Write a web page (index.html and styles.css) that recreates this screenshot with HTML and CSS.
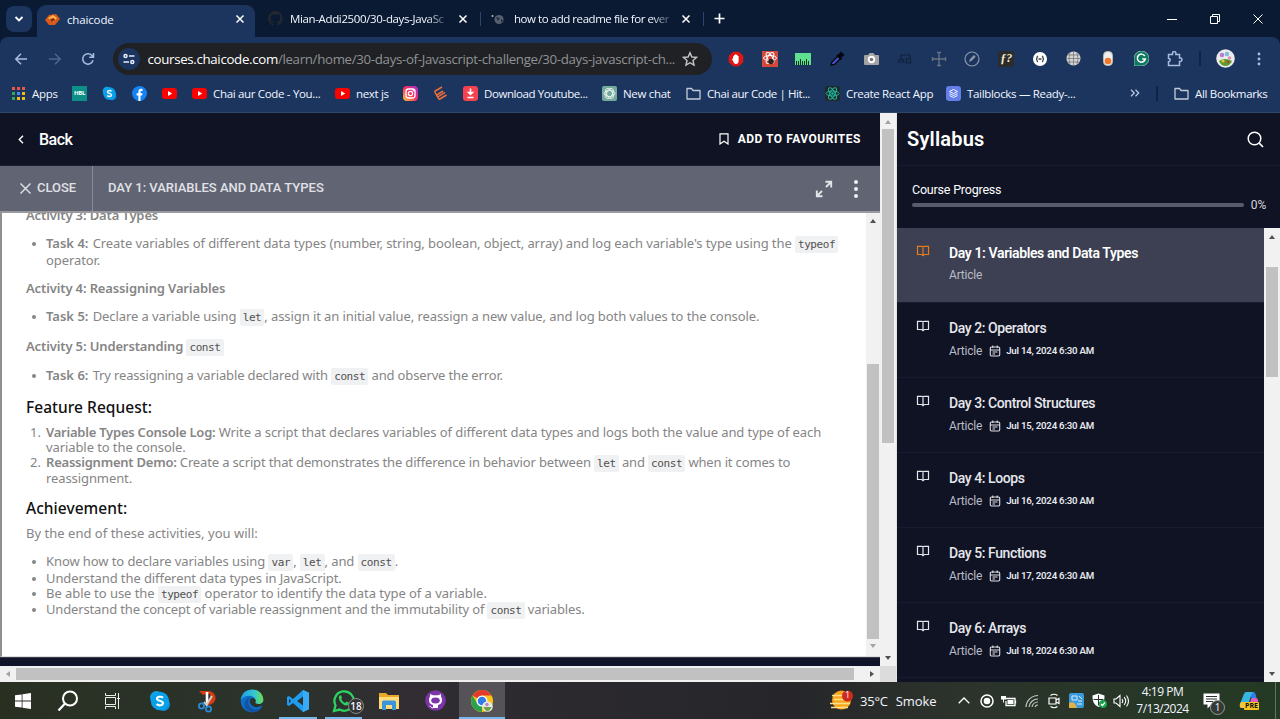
FILE: index.html
```html
<!DOCTYPE html>
<html lang="en">
<head>
<meta charset="utf-8">
<title>chaicode</title>
<link rel="stylesheet" href="styles.css">
</head>
<body>
<svg class="defs" width="0" height="0">
  <symbol id="x" viewBox="0 0 10 10"><path d="M1.500 1.500l7 7M8.500 1.500l-7 7" fill="none" stroke="currentColor" stroke-width="1.500"/></symbol>
  <symbol id="yt" viewBox="0 0 15 15"><rect y="2" width="15" height="11" rx="3" fill="#f00"/><path d="M6 5l4.200 2.500L6 10z" fill="#fff"/></symbol>
  <symbol id="folder" viewBox="0 0 15 15"><path d="M1 2.500h4.500l1.600 2H14v8.500H1z" fill="none" stroke="#c3cbdb" stroke-width="1.300" stroke-linejoin="round"/></symbol>
  <symbol id="book" viewBox="0 0 14 12"><path d="M1.500 1.300H6l1 .7 1-.7h4.500v8.200H8.300L7 10.600 5.700 9.500H1.500zM7 2v8.500" fill="none" stroke="currentColor" stroke-width="1.200"/></symbol>
  <symbol id="cal" viewBox="0 0 12 12"><path d="M2.500 2h7q1.200 0 1.200 1.200v6.600q0 1.200-1.200 1.200h-7q-1.200 0-1.200-1.200V3.200Q1.300 2 2.500 2zM1.500 5h9M3.800.5v2.500M8.200.5v2.500M3.500 7h5M3.500 9h2.500" fill="none" stroke="#dcdde4" stroke-width="1.100"/></symbol>
  <symbol id="skype" viewBox="0 0 22 22"><circle cx="7.500" cy="7.500" r="6.500" fill="#12a5e8"/><circle cx="14.500" cy="14.500" r="6.500" fill="#0b8ee0"/><circle cx="11" cy="11" r="9.200" fill="#08a0e9"/><path d="M14 7.800C12.500 6.300 8 6.200 8 8.700s6 1.600 6 4.400-4.800 2.800-6.300.9" fill="none" stroke="#fff" stroke-width="2.100"/></symbol>
</svg>

<div class="tabs">
  <div class="tab-search"><svg width="10" height="8" viewBox="0 0 10 8"><path d="M1.500 2L5 5.500 8.500 2" fill="none" stroke="#fff" stroke-width="1.800"/></svg></div>
  <div class="tab active">
    <svg width="15" height="13" viewBox="0 0 15 13"><path d="M0 7l4-5 7-1 4 5-5 6-6 0z" fill="#d65a1c"/><path d="M3 5l5-3 4 3-4 4z" fill="#ffb34a"/><path d="M5 6l4-1 1 2-3 2z" fill="#8a2c0b"/></svg>
    <span class="tab-name ui t-chai">chaicode</span>
    <svg class="tab-x" width="10" height="10"><use href="#x"/></svg>
  </div>
  <div class="tab tab2">
    <svg width="15" height="15" viewBox="0 0 16 16"><path fill="#23282f" d="M8 0a8 8 0 0 0-2.500 15.600c.4.100.5-.2.500-.4v-1.500c-2.200.5-2.700-1-2.700-1-.4-.9-.9-1.200-.9-1.200-.7-.5.1-.5.1-.5.800.1 1.200.8 1.200.8.700 1.200 1.900.9 2.300.7.100-.5.300-.9.500-1.100-1.800-.2-3.600-.9-3.600-4 0-.9.300-1.600.8-2.100-.1-.2-.4-1 .1-2.100 0 0 .7-.2 2.200.8a7.500 7.500 0 0 1 4 0c1.500-1 2.200-.8 2.200-.8.400 1.100.2 1.900.1 2.100.5.600.8 1.300.8 2.100 0 3.100-1.900 3.700-3.700 3.900.3.300.6.800.6 1.500v2.200c0 .2.100.5.500.4A8 8 0 0 0 8 0z"/></svg>
    <span class="tab-name ui fade">Mian-Addi2500/30-days-JavaSc</span>
    <svg class="tab-x" width="10" height="10"><use href="#x"/></svg>
  </div>
  <i class="tab-sep"></i>
  <div class="tab tab3">
    <svg width="13" height="12" viewBox="0 0 13 12"><circle cx="1.500" cy="3" r="1" fill="#bbb"/><circle cx="8" cy="6.500" r="4.600" fill="#57606e"/><path d="M5 4l4 1-2 3zM10 6l2 1-2 3z" fill="#222c3c"/></svg>
    <span class="tab-name ui fade">how to add readme file for ever</span>
    <svg class="tab-x" width="10" height="10"><use href="#x"/></svg>
  </div>
  <i class="tab-sep"></i>
  <svg class="plus" width="11" height="11" viewBox="0 0 11 11"><path d="M5.500.5v10M.5 5.500h10" stroke="#fff" stroke-width="1.700"/></svg>
  <div class="winctl">
    <svg width="10" height="10" viewBox="0 0 10 10"><path d="M0 5.500h10" stroke="#fff"/></svg>
    <svg width="10" height="10" viewBox="0 0 10 10"><path d="M.5 2.500h7v7h-7zM2.500 2.500v-2h7v7h-2" fill="none" stroke="#fff"/></svg>
    <svg width="10" height="10" viewBox="0 0 10 10"><path d="M.5.500l9 9M9.500.500l-9 9" stroke="#fff"/></svg>
  </div>
</div>

<div class="chrome">
  <div class="toolbar">
    <svg class="nav" width="14" height="14" viewBox="0 0 14 14"><path d="M13 7H2M7 1.800L1.800 7 7 12.200" fill="none" stroke="#a9bde0" stroke-width="1.500"/></svg>
    <svg class="nav" width="14" height="14" viewBox="0 0 14 14"><path d="M1 7h11M7 1.800L12.200 7 7 12.200" fill="none" stroke="#4d668e" stroke-width="1.500"/></svg>
    <svg class="nav" width="14" height="14" viewBox="0 0 14 14"><path d="M12 8.200A5.200 5.200 0 1 1 10.700 3.300L12.200 5M12.500 1v4.300H8.200" fill="none" stroke="#a9bde0" stroke-width="1.500"/></svg>
    <div class="omnibox">
      <div class="site"><svg width="12" height="12" viewBox="0 0 12 12"><g fill="none" stroke="#e8eefb" stroke-width="1.500"><circle cx="2.500" cy="3" r="1.500"/><path d="M6 3h5.500M.5 9H6"/><circle cx="9.300" cy="9" r="1.500"/></g></svg></div>
      <span class="url"><b>courses.chaicode.com</b>/learn/home/30-days-of-Javascript-challenge/30-days-javascript-ch...</span>
      <svg width="16" height="16" viewBox="0 0 16 16"><path d="M8 1.700l1.900 4.300 4.600.4-3.500 3.100 1 4.600L8 11.700l-4 2.400 1-4.600L1.500 6.400l4.600-.4z" fill="none" stroke="#c7c7c7" stroke-width="1.400"/></svg>
    </div>
    <div class="exts">
      <span><svg width="16" height="16" viewBox="0 0 16 16"><path d="M5 .7h6L15.300 5v6L11 15.300H5L.7 11V5z" fill="#e01616"/><path d="M5 8V5.200h1V4h1.200v-.8h1.200V4h1.200v1h1v5c0 2-1 3-2.700 3S5.600 11.500 5 10L3.700 7.800z" fill="#fff"/></svg></span>
      <span><svg width="16" height="16" viewBox="0 0 16 16"><rect width="16" height="16" fill="#d5483c"/><g fill="none" stroke="#fff"><ellipse cx="8" cy="7" rx="6.500" ry="2.500"/><ellipse cx="8" cy="7" rx="2.500" ry="6" transform="rotate(30 8 7)"/><ellipse cx="8" cy="7" rx="2.500" ry="6" transform="rotate(-30 8 7)"/></g><circle cx="9" cy="10.500" r="2.800" fill="#302020"/></svg></span>
      <span><svg width="16" height="12" viewBox="0 0 16 12"><rect width="16" height="12" fill="#5fe08f"/><path d="M1.500 12V8M3.500 12V8M5.500 12V6M7.500 12V8M9.500 12V8M11.500 12V6M13.500 12V8" stroke="#14351f"/></svg></span>
      <span><svg width="16" height="16" viewBox="0 0 16 16"><path d="M2 14l1-3 6-6 2.500 2.500-6 6z" fill="#4b50c8" stroke="#05070c" stroke-width="1.300"/><path d="M8 4l4.500 4.500M9.500 5L12 2l2 2-3 2.500z" stroke="#05070c" stroke-width="2" fill="#05070c"/></svg></span>
      <span><svg width="15" height="14" viewBox="0 0 15 14"><path d="M1 3h3l1.500-2h4L11 3h3q1 0 1 1v8q0 1-1 1H1q-1 0-1-1V4q0-1 1-1z" fill="#a3a3a3"/><circle cx="7.500" cy="7.500" r="3.700" fill="#fff"/><circle cx="7.500" cy="7.500" r="1.800" fill="#777"/></svg></span>
      <span><svg width="14" height="10" viewBox="0 0 14 10"><path d="M3 5V1h9v3M0 8h7M1 5.500h4.500V8H1zM8.500 4.500h4V9h-4z" fill="none" stroke="#10213d" stroke-width="1.200"/></svg></span>
      <span><svg width="16" height="16" viewBox="0 0 16 16"><path d="M8 2v12M1 8h14M6 1.500h4M6 14.500h4M1.500 6v4M14.500 6v4" stroke="#68717f" stroke-width="1.400"/></svg></span>
      <span><svg width="16" height="16" viewBox="0 0 16 16"><circle cx="8" cy="8" r="7" fill="none" stroke="#8b98ac" stroke-width="1.200"/><path d="M5 11l1-3 4-4 1.700 1.700-4 4z" fill="#8b98ac"/></svg></span>
      <span><b class="fx">ƒ?</b></span>
      <span><svg width="14" height="14" viewBox="0 0 14 14"><circle cx="7" cy="7" r="7" fill="#fff"/><path d="M4.800 4Q2.500 7 4.800 10M9.200 4Q11.500 7 9.200 10M5.500 7h3" fill="none" stroke="#444" stroke-width="1.300"/></svg></span>
      <span><svg width="15" height="15" viewBox="0 0 15 15"><circle cx="7.500" cy="7.500" r="7" fill="#d5d5d5"/><path d="M7.500.5v14M.5 7.500h14M1.500 4h12M1.500 11h12M4 1.500q-2 6 0 12M11 1.500q2 6 0 12" fill="none" stroke="#777" stroke-width=".8"/></svg></span>
      <span><svg width="10" height="15" viewBox="0 0 10 15"><rect x=".5" y=".5" width="9" height="14" rx="4" fill="#eee" stroke="#bba"/><circle cx="5" cy="10" r="3.300" fill="#f0772b"/></svg></span>
      <span><svg width="15" height="15" viewBox="0 0 15 15"><path d="M0 15V7.500A7.500 7.500 0 1 1 7.500 15z" fill="#0e7a5f" stroke="#cfe8e0" stroke-width=".6"/><path d="M10.800 5A4 4 0 1 0 11.300 8H8.200" fill="none" stroke="#fff" stroke-width="1.500"/></svg></span>
      <span><svg width="16" height="16" viewBox="0 0 16 16"><path d="M1.500 3.500h4V2.300a1.700 1.700 0 0 1 3.400 0v1.200h3.600v3.600h.8a1.700 1.700 0 0 1 0 3.400h-.8v4h-11v-3.700c2.300 0 2.300-3.400 0-3.400z" fill="none" stroke="#a9bde0" stroke-width="1.500"/></svg></span>
    </div>
    <i class="bar-sep"></i>
    <svg class="avatar" width="19" height="19" viewBox="0 0 19 19"><circle cx="9.500" cy="9.500" r="9.300" fill="#e9ecea"/><path d="M3 12q6-4 13 0-2 5-6.500 5T3 12z" fill="#5d9b32"/><circle cx="6" cy="6" r="2.300" fill="#bd7cd4"/><circle cx="11" cy="5" r="2.200" fill="#7bbbe8"/><circle cx="13.500" cy="9" r="1.800" fill="#e090b0"/><circle cx="7" cy="12" r="1.500" fill="#e8c437"/><circle cx="12" cy="13" r="1.200" fill="#c03a2b"/></svg>
    <svg class="kebab" width="4" height="14" viewBox="0 0 4 14"><g fill="#a9bde0"><circle cx="2" cy="2" r="1.400"/><circle cx="2" cy="7" r="1.400"/><circle cx="2" cy="12" r="1.400"/></g></svg>
  </div>
  <div class="bookmarks ui">
    <div class="bm"><svg width="13" height="13" viewBox="0 0 13 13"><path d="M0 1.500h3" stroke="#ea5546" stroke-width="3"/><path d="M5 1.500h3" stroke="#ea5546" stroke-width="3"/><path d="M10 1.500h3" stroke="#ea5546" stroke-width="3"/><path d="M0 6.500h3M0 11.500h3" stroke="#36a853" stroke-width="3"/><path d="M5 6.500h3" stroke="#4b8bf4" stroke-width="3"/><path d="M10 6.500h3M5 11.500h3M10 11.500h3" stroke="#f8bb15" stroke-width="3"/></svg><span class="w25">Apps</span></div>
    <div class="bm"><b class="hbl">HBL</b></div>
    <div class="bm"><svg width="15" height="15"><use href="#skype"/></svg></div>
    <div class="bm"><svg width="15" height="15" viewBox="0 0 15 15"><circle cx="7.500" cy="7.500" r="7.500" fill="#1583f2"/><path d="M6.400 15V9.400H4.600V7.200h1.800V5.800c0-2 1-3 2.700-3l1.400.1v2h-1c-.8 0-1 .4-1 1.100v1.200h2l-.4 2.200H8.500V15z" fill="#fff"/></svg></div>
    <div class="bm"><svg width="15" height="15"><use href="#yt"/></svg></div>
    <div class="bm"><svg width="15" height="15"><use href="#yt"/></svg><span class="w108">Chai aur Code - You...</span></div>
    <div class="bm"><svg width="15" height="15"><use href="#yt"/></svg><span class="w32">next js</span></div>
    <div class="bm"><svg width="15" height="15" viewBox="0 0 15 15"><defs><linearGradient id="ig" x1="0" y1="1" x2="1" y2="0"><stop offset="0" stop-color="#ffc83d"/><stop offset=".5" stop-color="#f5305f"/><stop offset="1" stop-color="#a22bdc"/></linearGradient></defs><rect width="15" height="15" rx="4" fill="url(#ig)"/><rect x="3" y="3" width="9" height="9" rx="2.500" fill="none" stroke="#fff" stroke-width="1.300"/><circle cx="7.500" cy="7.500" r="2.100" fill="none" stroke="#fff" stroke-width="1.200"/><circle cx="10.300" cy="4.700" r=".7" fill="#fff"/></svg></div>
    <div class="bm"><svg width="15" height="15" viewBox="0 0 15 15"><path d="M1.500 5.500l4.500 8M1.500 5.500L9 1M3.800 9l6.200-4M6 13.500L13.500 9M5 10.800l7-4.500" fill="none" stroke="#ee6c3c" stroke-width="1.500"/></svg></div>
    <div class="bm"><svg width="15" height="15" viewBox="0 0 15 15"><rect width="15" height="15" rx="3" fill="#f4434e"/><path d="M7.500 2.500v5M5.500 6.500l2 2 2-2zM4.500 11.500h6" fill="#fff" stroke="#fff" stroke-width="1.500"/></svg><span class="w103">Download Youtube...</span></div>
    <div class="bm"><svg width="15" height="15" viewBox="0 0 15 15"><rect width="15" height="15" rx="2" fill="#74aa9c"/><g fill="none" stroke="#fff" stroke-width=".8"><ellipse cx="7.500" cy="7.500" rx="5.500" ry="3"/><ellipse cx="7.500" cy="7.500" rx="5.500" ry="3" transform="rotate(60 7.500 7.500)"/><ellipse cx="7.500" cy="7.500" rx="5.500" ry="3" transform="rotate(120 7.500 7.500)"/></g></svg><span class="w48">New chat</span></div>
    <div class="bm"><svg width="15" height="15"><use href="#folder"/></svg><span class="w103">Chai aur Code | Hit...</span></div>
    <div class="bm"><svg width="15" height="15" viewBox="0 0 15 15"><rect width="15" height="15" rx="2" fill="#20282c"/><g fill="none" stroke="#1fb59a"><ellipse cx="7.500" cy="7.500" rx="6.500" ry="2.500"/><ellipse cx="7.500" cy="7.500" rx="6.500" ry="2.500" transform="rotate(60 7.500 7.500)"/><ellipse cx="7.500" cy="7.500" rx="6.500" ry="2.500" transform="rotate(120 7.500 7.500)"/></g><circle cx="7.500" cy="7.500" r="1.300" fill="#1fb59a"/></svg><span class="w86">Create React App</span></div>
    <div class="bm"><svg width="15" height="15" viewBox="0 0 15 15"><rect width="15" height="15" rx="3" fill="#667eea"/><path d="M7.500 3.500l4 2-4 2-4-2zM3.500 7.500l4 2 4-2M3.500 9.500l4 2 4-2" fill="none" stroke="#fff" stroke-width=".9"/></svg><span class="w108">Tailblocks — Ready-...</span></div>
    <div class="bm-end">
      <svg width="10" height="8" viewBox="0 0 10 8"><path d="M1 .8L4.200 4 1 7.200M5.500.8L8.700 4 5.500 7.200" fill="none" stroke="#b5c6e6" stroke-width="1.300"/></svg>
      <i class="bar-sep"></i>
      <div class="bm"><svg width="15" height="15"><use href="#folder"/></svg><span class="w71">All Bookmarks</span></div>
    </div>
  </div>
</div>

<div class="page">
  <main>
    <div class="head">
      <svg width="6" height="9" viewBox="0 0 6 9"><path d="M5 .8L1.300 4.500 5 8.200" fill="none" stroke="#fff" stroke-width="1.400"/></svg>
      <span class="back">Back</span>
      <div class="fav"><svg width="10" height="12" viewBox="0 0 10 12"><path d="M1 .8h8v10.200L5 8.200 1 11z" fill="none" stroke="#fff" stroke-width="1.200"/></svg><span>ADD TO FAVOURITES</span></div>
    </div>
    <div class="strip">
      <div class="close"><svg width="11" height="11" viewBox="0 0 11 11"><path d="M.5.500l10 10M10.500.500l-10 10" stroke="#e3e4e8" stroke-width="1.400"/></svg><span>CLOSE</span></div>
      <span class="crumb">DAY 1: VARIABLES AND DATA TYPES</span>
      <svg width="18" height="18" viewBox="0 0 18 18"><path d="M10.500 1.800h5.700v5.700M16 2l-5 5M7.500 16.200H1.800v-5.700M2 16l5-5" fill="none" stroke="#e3e4e8" stroke-width="1.900"/></svg>
      <svg class="more" width="4" height="18" viewBox="0 0 4 18"><g fill="#eceef2"><circle cx="2" cy="2" r="2"/><circle cx="2" cy="9" r="2"/><circle cx="2" cy="16" r="2"/></g></svg>
    </div>
    <div class="frame">
      <article>
        <p class="a1"><b>Activity 3: Data Types</b></p>
        <p class="li g13"><i></i><b class="task">Task 4:</b> Create variables of different data types (number, string, boolean, object, array) and log each variable's type using the <code>typeof</code></p>
        <p class="in g2">operator.</p>
        <p class="g13"><b>Activity 4: Reassigning Variables</b></p>
        <p class="li g13"><i></i><b class="task">Task 5:</b> Declare a variable using <code>let</code>, assign it an initial value, reassign a new value, and log both values to the console.</p>
        <p class="g15"><b>Activity 5: Understanding <code>const</code></b></p>
        <p class="li g14 tight"><i></i><b class="task">Task 6:</b> Try reassigning a variable declared with <code>const</code> and observe the error.</p>
        <h3 class="g17">Feature Request:</h3>
        <p class="li g10"><em>1.</em><b class="lead">Variable Types Console Log:</b> Write a script that declares variables of different data types and logs both the value and type of each</p>
        <p class="in">variable to the console.</p>
        <p class="li tight"><em>2.</em><b class="lead">Reassignment Demo:</b> Create a script that demonstrates the difference in behavior between <code>let</code> and <code>const</code> when it comes to</p>
        <p class="in g1">reassignment.</p>
        <h3 class="g15">Achievement:</h3>
        <p class="g10 loose">By the end of these activities, you will:</p>
        <p class="li g13"><i></i>Know how to declare variables using <code>var</code>, <code>let</code>, and <code>const</code>.</p>
        <p class="li g2"><i></i>Understand the different data types in JavaScript.</p>
        <p class="li half"><i></i>Be able to use the <code>typeof</code> operator to identify the data type of a variable.</p>
        <p class="li g1 tight"><i></i>Understand the concept of variable reassignment and the immutability of <code>const</code> variables.</p>
      </article>
      <div class="vbar inner"><i class="up"></i><b></b><i class="down dim"></i></div>
    </div>
    <div class="foot"></div>
    <div class="hbar"><i class="left"></i><b></b><i class="right"></i></div>
  </main>
  <div class="gutter"><div class="vbar outer"><i class="up dim"></i><b></b><i class="down"></i></div><div class="corner"></div></div>
  <aside>
    <div class="syl"><span>Syllabus</span><svg width="17" height="17" viewBox="0 0 17 17"><circle cx="7.500" cy="7.500" r="6.300" fill="none" stroke="#fff" stroke-width="1.500"/><path d="M12.200 12.200l3.800 3.800" stroke="#fff" stroke-width="1.700"/></svg></div>
    <div class="prog"><span>Course Progress</span><div class="meter"><i></i><span>0%</span></div></div>
    <div class="listwrap">
      <div class="list">
        <div class="item on"><svg width="14" height="12"><use href="#book"/></svg><div><strong>Day 1: Variables and Data Types</strong><small>Article</small></div></div>
        <div class="item"><svg width="14" height="12"><use href="#book"/></svg><div><strong>Day 2: Operators</strong><small>Article <svg width="12" height="12"><use href="#cal"/></svg><time>Jul 14, 2024 6:30 AM</time></small></div></div>
        <div class="item"><svg width="14" height="12"><use href="#book"/></svg><div><strong>Day 3: Control Structures</strong><small>Article <svg width="12" height="12"><use href="#cal"/></svg><time>Jul 15, 2024 6:30 AM</time></small></div></div>
        <div class="item"><svg width="14" height="12"><use href="#book"/></svg><div><strong>Day 4: Loops</strong><small>Article <svg width="12" height="12"><use href="#cal"/></svg><time>Jul 16, 2024 6:30 AM</time></small></div></div>
        <div class="item"><svg width="14" height="12"><use href="#book"/></svg><div><strong>Day 5: Functions</strong><small>Article <svg width="12" height="12"><use href="#cal"/></svg><time>Jul 17, 2024 6:30 AM</time></small></div></div>
        <div class="item last"><svg width="14" height="12"><use href="#book"/></svg><div><strong>Day 6: Arrays</strong><small>Article <svg width="12" height="12"><use href="#cal"/></svg><time>Jul 18, 2024 6:30 AM</time></small></div></div>
      </div>
      <div class="vbar side"><i class="up"></i><b></b><i class="down"></i></div>
    </div>
  </aside>
</div>

<div class="taskbar ui">
  <span class="c45"><svg width="16" height="16" viewBox="0 0 16 16"><path d="M0 2.300L6.700 1.400v6.100H0zM7.500 1.300L16 .1v7.400H7.500zM0 8.400h6.700v6.200L0 13.700zM7.500 8.400H16v7.500l-8.500-1.200z" fill="#fff"/></svg></span>
  <span class="c45"><svg width="22" height="22" viewBox="0 0 22 22"><circle cx="13" cy="8.500" r="7" fill="none" stroke="#fff" stroke-width="2"/><path d="M8 13.500L1.500 20.500" stroke="#fff" stroke-width="2.300"/></svg></span>
  <span class="c45"><svg width="16" height="16" viewBox="0 0 16 16"><path d="M.5 0v2.500h10V0M.5 16v-2.500h10V16M.5 4.500v7h10v-7zM13.500 0v16M12 5.500h3" fill="none" stroke="#eee"/></svg></span>
  <span class="c50"><svg width="22" height="22"><use href="#skype"/></svg></span>
  <span class="c44"><svg width="20" height="24" viewBox="0 0 20 24"><path d="M2 2h9a7 7 0 0 1 1 14H9V11l4-2V5H9L6 6z" fill="#d83b12"/><path d="M10 3v11" stroke="#fff" stroke-width="2.600"/><path d="M9.500 16L15 7M7 13l4 5" stroke="#ccc" stroke-width="2"/><g fill="none" stroke="#2a8ad6" stroke-width="1.800"><circle cx="4.500" cy="17" r="2.600"/><circle cx="11.500" cy="20" r="2.600"/></g></svg></span>
  <span class="c46"><svg width="24" height="24" viewBox="0 0 24 24"><defs><linearGradient id="eg" x1="0" x2="1"><stop offset="0" stop-color="#1b9de8"/><stop offset=".6" stop-color="#35c8d0"/><stop offset="1" stop-color="#6bdf4b"/></linearGradient></defs><circle cx="12" cy="12" r="11.300" fill="#0f6fc6"/><path d="M.8 11C2-3.500 22.500-2.500 23.300 10.500c.3 4-4 5.500-7.500 4-2-.8-.8-1.500-.5-3.200C15.500 6.500 6 4.500.8 11z" fill="url(#eg)"/><path d="M10 8.500c-4 4-1 11.500 5 11.800 2.600.1 5-.8 7-2.300-3 7-14 7-17 .5C3.500 14 6 9 10 8.500z" fill="#1453a4"/><path d="M11 9.500c-3 2.800-.3 7.500 3.700 8.500 3 .5 5.500-.5 8-1.500l.5-4c-1.500 3-6 3.200-8 1.500 1.500-2 .5-5.500-4.200-4.500z" fill="#2b332c"/></svg></span>
  <span class="c46 run"><svg width="22" height="22" viewBox="0 0 22 22"><path d="M16 0l6 2.700v16.600L16 22 6 13l-4 3-2-1V7l2-1 4 3zM16 6.500L10 11l6 4.500zM2 8.800v4.400L4 11z" fill="#1f9cf0" fill-rule="evenodd"/><path d="M16 0l6 2.700v16.600L16 22z" fill="#38abf5"/></svg></span>
  <span class="c45 run wa"><svg width="24" height="24" viewBox="0 0 24 24"><path d="M2 22l1.500-5.500A9.700 9.700 0 1 1 7.500 20.600z" fill="none" stroke="#2bd45e" stroke-width="2.300"/><path d="M7 7.500c1-2 2-1.500 2.500-.2l.5 1.400-.8 1.200c1 2 2 3 4 4l1.300-1.300 2.500 1.200c0 2-2 3-3.500 2.600C10 15.500 6 11 7 7.500z" fill="#2bd45e"/></svg><em>18</em></span>
  <span class="c46"><svg width="20" height="18" viewBox="0 0 20 18"><path d="M0 1h7l2 2h11v14H0z" fill="#e9a827"/><path d="M0 5h20v12H0z" fill="#ffdc78"/><path d="M3 10q0-1.500 1.500-1.500h11q1.500 0 1.500 1.500v8h-4v-5H7v5H3z" fill="#3a95dc"/></svg></span>
  <span class="c46"><svg width="21" height="21" viewBox="0 0 21 21"><circle cx="10.500" cy="10.500" r="10.300" fill="#7b35a8"/><path d="M8 18v-3c-3-.8-4-2.500-4-5 0-1.500.4-2.500 1-3.200L5 4l3 1.300h5L16 4v2.800c.7.700 1 1.700 1 3.200 0 2.500-1 4.200-4 5v3" fill="#fff"/><path d="M8 18c-2 0-2-2-3.500-2" fill="none" stroke="#fff"/><ellipse cx="10.500" cy="10.500" rx="4.300" ry="3" fill="#7b35a8"/></svg></span>
  <span class="c46 run cur"><svg width="24" height="24" viewBox="0 0 24 24"><circle cx="12" cy="12" r="11" fill="#fbc116"/><path d="M12 12L2.500 6.500A11 11 0 0 1 21.500 6.500H12z" fill="#e33b2e"/><path d="M12 23A11 11 0 0 1 2.500 6.500L7.500 15 12 17z" fill="#2aa14c"/><circle cx="12" cy="12" r="5.500" fill="#fff"/><circle cx="12" cy="12" r="4.300" fill="#2f7de9"/><circle cx="17.500" cy="17.500" r="5.300" fill="#e3e9dc"/><path d="M13.500 18h8q-1.500 4-4 4t-4-4z" fill="#6fa049"/><circle cx="17" cy="15.500" r="1.700" fill="#b983cf"/></svg></span>
  <div class="weather"><svg width="24" height="22" viewBox="0 0 24 22"><circle cx="11.500" cy="10" r="9.500" fill="#f9a61d"/><path d="M2 5.500h13M4 9.500h12M0 13.500h20M1 17.500h17" stroke="#ffe08a" stroke-width="1.700"/><circle cx="17.500" cy="6" r="5.500" fill="#cf2a20"/></svg><em>1</em><span class="temp">35°C</span><span>Smoke</span></div>
  <div class="tray">
    <span><svg width="12" height="7" viewBox="0 0 12 7"><path d="M.7 6.300L6 1l5.300 5.300" fill="none" stroke="#fff" stroke-width="1.300"/></svg></span>
    <span><svg width="14" height="14" viewBox="0 0 14 14"><circle cx="7" cy="7" r="6" fill="none" stroke="#fff" stroke-width="1.500"/><circle cx="7" cy="7" r="3.300" fill="#fff"/></svg></span>
    <span><svg width="16" height="12" viewBox="0 0 16 12"><path d="M4 3.500h10v7H5V6M14.500 5.500v3" fill="none" stroke="#fff" stroke-width="1.300"/><path d="M6.500 5h6v4h-6zM0 1h5v3.500H0z" fill="#fff"/><path d="M2.500 4v3.500" stroke="#fff"/></svg></span>
    <span><svg width="14" height="14" viewBox="0 0 14 14"><path d="M1 13A12 12 0 0 1 13 1.500M4 13a9 9 0 0 1 9-8M7 13a6 6 0 0 1 6-5M10 13a3 3 0 0 1 3-2" fill="none" stroke="#c5c8c5" stroke-width="1.200"/></svg></span>
    <span><svg width="12" height="16" viewBox="0 0 12 16"><path d="M1 5h7v6H1zM8 7l3-1.500v5L8 9M2.500 2.500q3.500-2.500 7 0M2.500 13.500q3.500 2.500 7 0" fill="none" stroke="#fff" stroke-width="1.200"/></svg></span>
    <span><svg width="15" height="15" viewBox="0 0 15 15"><rect width="15" height="15" rx="2" fill="#3a9bdc"/><path d="M0 10q6-3 8 5H0z" fill="#e0b04a"/><path d="M3 3h5v4H3zM9 8h4M8 11h5M10 3l3 3" fill="none" stroke="#d5efff"/></svg></span>
    <span><svg width="15" height="15" viewBox="0 0 15 15"><path d="M6.500.500l6 2c0 6-1 9-6 11.500C1.500 11.500.5 8.500.5 2.500z" fill="#fff"/><path d="M6.500 2v10.500M1.500 6.500h10" stroke="#2b332c"/><circle cx="11" cy="11" r="4" fill="#16a34a"/><path d="M9 11l1.500 1.500 2.500-3" fill="none" stroke="#fff" stroke-width="1.200"/></svg></span>
    <span><svg width="17" height="14" viewBox="0 0 17 14"><path d="M1 5h2l4-3.500v11L3 9H1zM9 5q1.500 2 0 4M11.200 3.200q3 3.800 0 7.600M13.500 1.500q4 5.500 0 11" fill="none" stroke="#fff" stroke-width="1.100"/></svg></span>
  </div>
  <div class="clock"><span>4:19 PM</span><span>7/13/2024</span></div>
  <div class="notif"><svg width="17" height="16" viewBox="0 0 17 16"><path d="M.5.500h16v11h-8l-4 4v-4h-4z" fill="#fff"/><path d="M3 3.500h11M3 6h11M3 8.500h7" stroke="#2b332c"/></svg><em>1</em></div>
  <div class="pilot"><svg width="20" height="18" viewBox="0 0 20 18"><path d="M5 1q1-1 3-1h6q2 0 2.500 2l1 4h-5l-1-3q-.5-2-2-2z" fill="#2d7ff0"/><path d="M8 0q-2.500 0-3.500 3L1 12q-1 4 2 4h3q2 0 3-3l3-9q.7-3 2-4z" fill="#36b7df"/><path d="M1 12q-1 4 2 4h3q2 0 3-3l1-3H2z" fill="#f4c63b"/><path d="M12.500 6h4q3 0 2.500 3.500L17.500 16H9z" fill="#df5bbd"/></svg><em>PRE</em></div>
  <i class="desk"></i>
</div>
</body>
</html>
```
FILE: styles.css
```css
* { box-sizing: border-box; }
body { margin: 0; width: 1280px; height: 719px; overflow: hidden; background: #0a1a33; display: flex; flex-direction: column; font-family: Roboto, sans-serif; }
svg { display: block; flex: none; }
i, em { font-style: normal; }
.defs { position: absolute; }
.ui { font-family: "Open Sans", sans-serif; font-size: 11.500px; letter-spacing: -0.32px; color: #f2f6ff; white-space: nowrap; }

/* tab strip */
.tabs { height: 37px; flex: none; display: flex; align-items: center; padding-left: 6px; }
.tab-search { width: 26px; height: 26px; border-radius: 8px; background: #1b355e; display: grid; place-items: center; margin-right: 5px; }
.tab { display: flex; align-items: center; height: 32px; }
.active { align-self: flex-end; background: #1b355e; border-radius: 9px 9px 0 0; width: 218px; padding: 0 10px 4px 8px; height: 32px; }
.tab-name { flex: 1; margin-left: 7px; overflow: hidden; }
.fade { -webkit-mask-image: linear-gradient(90deg, #000 88%, rgba(0,0,0,.2)); mask-image: linear-gradient(90deg, #000 88%, rgba(0,0,0,.2)); }
.tab-x { color: #fff; }
.t-chai { letter-spacing: -0.15px; }
.tab2 { margin-left: 13px; width: 200px; }
.tab2 .fade { margin-right: 12px; letter-spacing: -0.36px; }
.tab3 { margin-left: 10px; width: 200px; }
.tab3 .fade { margin: 0 11px 0 10px; letter-spacing: -0.45px; }
.tab-sep { width: 1px; height: 14px; background: #2c456e; margin-left: 12px; }
.plus { margin-left: 10px; }
.winctl { display: flex; gap: 33px; margin-left: auto; padding-right: 17px; }

/* toolbar and bookmarks */
.chrome { height: 76px; flex: none; background: #1b355e; border-radius: 8px 8px 0 0; border-bottom: 1px solid #2e4668; }
.toolbar { height: 43px; display: flex; align-items: center; padding-left: 14px; }
.nav { margin-right: 19.500px; }
.omnibox { width: 599px; height: 32px; border-radius: 16px; background: #202124; display: flex; align-items: center; padding: 0 14px 0 5px; margin-left: -2px; }
.site { flex: none; width: 22px; height: 22px; border-radius: 11px; background: #1b355e; display: grid; place-items: center; margin-right: 8px; }
.url { flex: 1; font: 13.300px "Open Sans", sans-serif; letter-spacing: -0.33px; color: #8f9296; white-space: nowrap; }
.url b { font-weight: 400; color: #fff; }
.exts { display: flex; margin-left: 7.500px; }
.exts span { width: 33.800px; display: grid; place-items: center; }
.fx { width: 16px; height: 16px; background: #2c2c2c; color: #f3ead2; font: italic bold 12px/15px "Liberation Serif", serif; text-align: center; border-radius: 2px; }
.bar-sep { width: 2px; height: 15px; background: #0e2444; }
.toolbar .bar-sep { margin-left: 7px; }
.avatar { margin-left: 15px; }
.kebab { margin-left: 22px; }
.bookmarks { display: flex; align-items: center; gap: 15px; height: 26px; padding: 0 14px 0 12px; }
.bookmarks .bm { display: flex; align-items: center; gap: 6px; }
.bm:first-child { gap: 7px; }
.hbl { width: 15px; height: 15px; background: #0b8f86; color: #fff; font: bold 6px/15px "Open Sans", sans-serif; text-align: center; }
.w25 { width: 25px; } .w32 { width: 32px; } .w48 { width: 48px; } .w71 { width: 71px; } .w86 { width: 85px; } .w103 { width: 103px; } .w108 { width: 107px; }
.w103 { letter-spacing: -0.42px; }
.bm-end { display: flex; align-items: center; margin-left: auto; gap: 16px; }

/* page */
.page { height: 569px; flex: none; display: flex; background: #101324; color: #fff; }
main { width: 880px; display: flex; flex-direction: column; }
.head { height: 53px; display: flex; align-items: center; padding: 0 19px 0 18px; border-bottom: 1px solid #1c2034; }
.back { font-size: 16px; margin-left: 15px; font-weight: 500; letter-spacing: -0.5px; }
.fav { margin-left: auto; display: flex; align-items: center; gap: 9px; font-size: 12px; font-weight: 700; letter-spacing: .52px; }
.strip { height: 45px; background: #616473; color: #e0e1e6; display: flex; align-items: center; font-size: 13px; padding-right: 22px; font-weight: 500; letter-spacing: -0.02px; }
.strip span { padding-bottom: 2px; }
.close { display: flex; align-items: center; gap: 6px; height: 100%; padding-left: 20px; width: 93px; border-right: 1px solid #888b98; }
.crumb { flex: 1; margin-left: 15px; }
.more { margin-left: 21px; }
.frame { height: 446px; background: #fff; border-top: 2px solid #9a9a9e; border-left: 2px solid #8f8f8f; border-bottom: 1px solid #dcdcdc; display: flex; }
article { flex: 1; overflow: hidden; padding-left: 24px; color: #858585; font: 13px/15px "Noto Sans", sans-serif; letter-spacing: -0.09px; white-space: nowrap; }
article p, article h3 { margin: 0; height: 15px; }
article .a1 { margin-top: -5px; }
article b { font-weight: 600; letter-spacing: -0.13px; }
article .task { letter-spacing: 0; margin-right: 1px; }
article .lead { letter-spacing: -0.23px; }
article .tight { letter-spacing: -0.15px; }
article .half { letter-spacing: -0.05px; }
article .loose { letter-spacing: .02px; }
article h3 { color: #111; font-size: 15.500px; font-weight: 500; letter-spacing: .04px; }
article code { font: 11px/15px "DejaVu Sans Mono", monospace; letter-spacing: -0.4px; color: #505050; background: #f0f1f2; border-radius: 2px; padding: 2px 3px; }
article .g1 { margin-top: 1px; } article .g2 { margin-top: 2px; } article .g10 { margin-top: 10px; } article .g13 { margin-top: 13px; } article .g14 { margin-top: 14px; } article .g15 { margin-top: 15px; } article .g17 { margin-top: 17px; }
.in { padding-left: 20px; }
.li i { display: inline-block; width: 4px; height: 4px; border-radius: 2px; background: #858585; margin: 0 10px 2px 6px; }
.li em { display: inline-block; width: 20px; padding-left: 4px; letter-spacing: 0; }

.vbar { width: 16px; background: #f1f1f1; display: flex; flex-direction: column; align-items: center; }
.vbar i { width: 0; height: 0; border: 3.500px solid transparent; }
.vbar b { width: 12px; background: #c1c1c1; }
.up { border-bottom: 4px solid #505050 !important; border-top: 0 !important; }
.down { border-top: 4px solid #505050 !important; border-bottom: 0 !important; margin-top: auto; }
.up.dim { border-bottom-color: #a3a3a3 !important; }
.down.dim { border-top-color: #a3a3a3 !important; }
.inner { width: 14px; padding: 6px 0 8px; }
.inner b { margin-top: 141px; height: 275px; }
.outer { height: 553px; padding: 7px 0 6px; }
.outer b { margin-top: 5px; height: 314px; }
.side { padding: 7px 0 6px; }
.side b { margin-top: 28px; height: 110px; }
.gutter { width: 17px; background: #f1f1f1; border-right: 1px solid #e4e4e4; }
.corner { height: 16px; background: #dcdcdc; }
.foot { height: 9px; background: #111429; border-top: 1px solid #3a3c48; }
.hbar { height: 16px; background: #f1f1f1; display: flex; align-items: center; padding: 0 6px 0 6px; }
.hbar i { border: 3.500px solid transparent; }
.left { border-right: 4px solid #a3a3a3 !important; border-left: 0 !important; }
.right { border-left: 4px solid #505050 !important; border-right: 0 !important; margin-left: auto; }
.hbar b { margin-left: 6px; width: 838px; height: 12px; background: #c1c1c1; }

/* syllabus */
aside { flex: 1; display: flex; flex-direction: column; }
.syl { height: 53px; display: flex; align-items: center; justify-content: space-between; padding: 0 16px 0 10px; font-size: 20px; font-weight: 600; letter-spacing: .2px; border-bottom: 1px solid #171b2e; }
.prog { height: 62px; padding: 16px 14px 0 15px; font-size: 12.500px; letter-spacing: -0.2px; line-height: 16px; }
.meter { display: flex; align-items: center; justify-content: space-between; color: #d4d5db; font-size: 12px; height: 14px; }
.meter i { width: 332px; height: 4px; border-radius: 2px; background: #595c6b; }
.listwrap { flex: 1; display: flex; min-height: 0; }
.list { flex: 1; overflow: hidden; }
.item { height: 75px; display: flex; border-bottom: 1px solid #171b2e; padding: 17px 0 0 19px; color: #e6e7ec; }
.item > svg { margin-right: 19px; }
.item strong { display: block; font-size: 14px; font-weight: 500; letter-spacing: -0.42px; line-height: 16px; }
.item small { display: flex; align-items: center; font-size: 12px; letter-spacing: -0.2px; color: #b9bbc5; line-height: 16px; margin-top: 6px; }
.item small svg { margin: 0 5px 0 7px; }
time { font-size: 9.700px; font-weight: 600; color: #e6e7ec; letter-spacing: -0.24px; padding-top: 1px; }
.on { background: #3c4052; }
.on > svg { color: #e67a1c; }
.on strong { color: #fff; font-weight: 600; letter-spacing: -0.38px; }

/* taskbar */
.taskbar { height: 37px; flex: none; display: flex; background: linear-gradient(90deg, #293022, #2b332c 22%, #312d33 32%, #2b292d 45%, #26262a 62%, #2c332b 75%, #243a24); letter-spacing: 0; }
.taskbar > span { display: grid; place-items: center; position: relative; }
.c44 { width: 44px; } .c45 { width: 45px; } .c46 { width: 46px; } .c50 { width: 50px; }
.run::after { content: ""; position: absolute; bottom: 0; left: 4px; right: 4px; height: 2px; background: #76b9ed; }
.cur { background: #555357; margin-left: 1px; }
.cur::after { left: 0; right: 0; }
.wa em { position: absolute; left: 27px; top: 16px; width: 16px; height: 16px; border-radius: 8px; background: #333; border: 1px solid #888; font-size: 10px; line-height: 14px; text-align: center; font-weight: 600; }
.weather { position: relative; display: flex; align-items: center; margin-left: 325px; width: 124px; font-size: 13px; }
.weather em { position: absolute; left: 15px; top: 6px; font-size: 9px; }
.temp { margin: 0 8px 0 6px; letter-spacing: -0.2px; }
.weather span:last-child { letter-spacing: -0.1px; }
.tray { display: flex; margin-left: -1px; }
.tray span { width: 22.500px; display: grid; place-items: center; }
.clock { width: 59px; display: flex; flex-direction: column; align-items: center; font-size: 12px; line-height: 17px; padding-top: 1px; letter-spacing: -0.5px; }
.notif { position: relative; width: 44px; display: grid; place-items: center; padding-right: 5px; }
.notif em { position: absolute; left: 18px; top: 18px; width: 15px; height: 15px; border-radius: 8px; background: #333a35; border: 1px solid #999; font-size: 10px; line-height: 13px; text-align: center; }
.pilot { position: relative; width: 26px; display: grid; place-items: center; }
.pilot em { position: absolute; left: 8px; top: 20px; background: #f7c51e; color: #111; font-size: 7px; font-weight: 700; line-height: 8px; padding: 0 1px; border-radius: 1px; }
.desk { margin-left: auto; width: 1px; margin-right: 4px; background: #667066; }
```
